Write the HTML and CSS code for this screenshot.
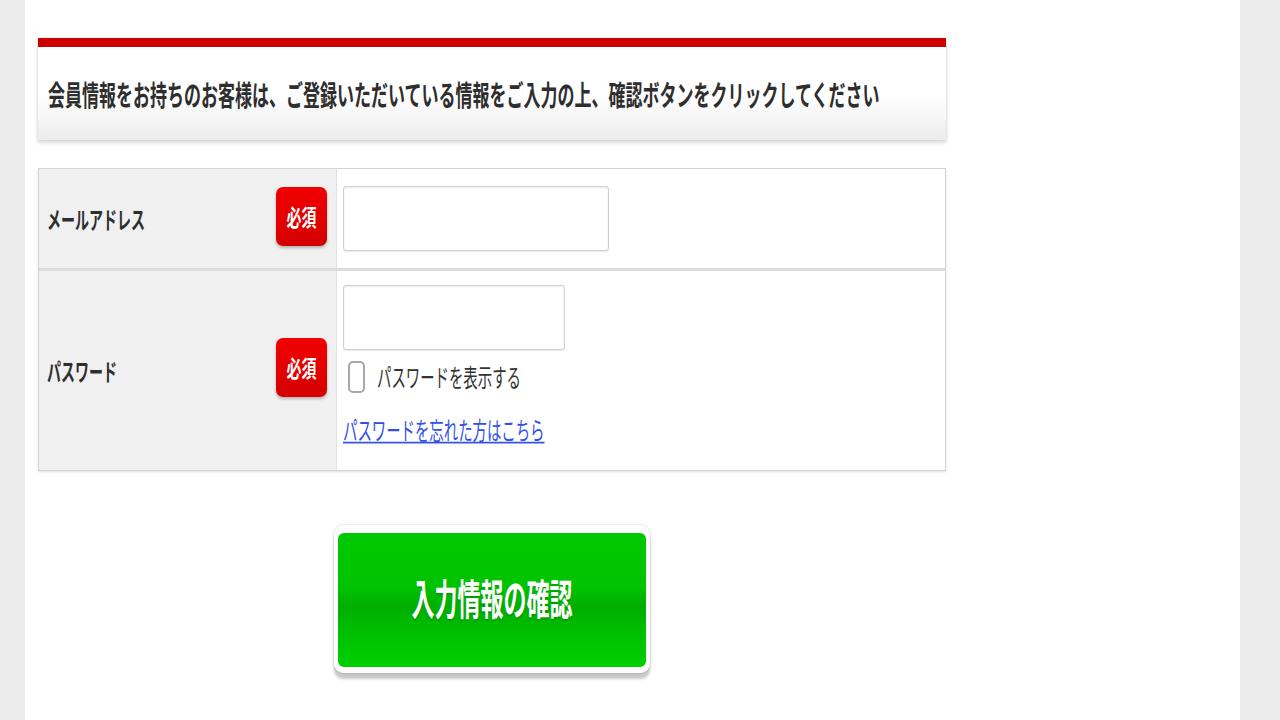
FILE: index.html
```html
<!DOCTYPE html>
<html lang="ja">
<head>
<meta charset="utf-8">
<title>ログイン</title>
<link rel="stylesheet" href="styles.css">
</head>
<body>
<div class="page">
  <div class="content">
    <div class="notice">
      <p class="notice-text"><span class="tall">会員情報をお持ちのお客様は、ご登録いただいている情報をご入力の上、確認ボタンをクリックしてください</span></p>
    </div>

    <div class="form-table">
      <div class="row row-email">
        <div class="label-cell">
          <span class="label"><span class="tall">メールアドレス</span></span>
          <span class="badge"><span class="tall-s">必須</span></span>
        </div>
        <div class="field-cell">
          <input class="text-input email" type="text" aria-label="メールアドレス">
        </div>
      </div>
      <div class="row row-pass">
        <div class="label-cell">
          <span class="label"><span class="tall">パスワード</span></span>
          <span class="badge"><span class="tall-s">必須</span></span>
        </div>
        <div class="field-cell">
          <input class="text-input pass" type="password" aria-label="パスワード">
          <label class="show-pass"><input type="checkbox" class="check"><span class="tall">パスワードを表示する</span></label>
          <a href="#" class="forgot"><span class="tall">パスワードを忘れた方はこちら</span></a>
        </div>
      </div>
    </div>

    <div class="actions">
      <div class="confirm-frame">
        <button class="confirm" type="button"><span class="tall-b">入力情報の確認</span></button>
      </div>
    </div>
  </div>
</div>
</body>
</html>
```

FILE: styles.css
```css
html, body {
  margin: 0;
  padding: 0;
}
body {
  background: #ececec;
  font-family: "Noto Sans CJK JP", "Noto Sans", sans-serif;
  color: #333;
}
.page {
  width: 1215px;
  min-height: 720px;
  margin-left: 25px;
  background: #fff;
  padding: 38px 0 0 13px;
  box-sizing: border-box;
}
.content {
  width: 908px;
}
.tall {
  display: inline-block;
  transform: scaleY(1.7);
}
.tall-s {
  display: inline-block;
  transform: scaleY(1.5);
}
.tall-b {
  display: inline-block;
  transform: scaleY(1.85);
}

/* notice */
.notice {
  border-top: 9px solid #cc0000;
  height: 102px;
  box-sizing: border-box;
  background: linear-gradient(#ffffff 0%, #ffffff 50%, #ececec 100%);
  box-shadow: 0 3px 4px rgba(0, 0, 0, 0.15), 1px 0 2px rgba(0, 0, 0, 0.05), -1px 0 2px rgba(0, 0, 0, 0.05);
  display: flex;
  align-items: center;
  padding-left: 10px;
}
.notice-text {
  margin: 0;
  font-size: 17px;
  font-weight: bold;
  line-height: 1;
  color: #2e2e2e;
  white-space: nowrap;
}

/* form table */
.form-table {
  margin-top: 28px;
  border: 1px solid #d4d4d4;
  box-shadow: 0 1px 2px rgba(0, 0, 0, 0.12);
}
.row {
  display: grid;
  grid-template-columns: 298px 1fr;
}
.row + .row {
  border-top: 3px solid #dcdcdc;
}
.row-email {
  height: 99px;
}
.row-pass {
  height: 199px;
}
.label-cell {
  background: #f0f0f0;
  display: flex;
  align-items: center;
  justify-content: space-between;
  padding: 0 9px 0 8px;
  border-right: 1px solid #e2e2e2;
}
.label {
  font-size: 14px;
  font-weight: bold;
  color: #2e2e2e;
  line-height: 1;
}
.badge {
  width: 51px;
  height: 59px;
  border-radius: 7px;
  background: linear-gradient(#f20000, #d40000);
  box-shadow: 0 2px 3px rgba(0, 0, 0, 0.25);
  color: #fff;
  font-size: 15px;
  font-weight: bold;
  display: flex;
  align-items: center;
  justify-content: center;
}
.row-email .badge {
  margin-top: -5px;
}
.row-pass .badge {
  margin-top: -6px;
}
.field-cell {
  background: #fff;
  padding-left: 6px;
}
.row-email .field-cell {
  display: flex;
  align-items: center;
}
.row-pass .field-cell {
  padding-top: 14px;
}
.text-input {
  display: block;
  height: 65px;
  box-sizing: border-box;
  border: 1px solid #cfcfcf;
  border-radius: 3px;
  box-shadow: inset 0 1px 2px rgba(0, 0, 0, 0.08), 0 1px 1px rgba(0, 0, 0, 0.08);
  background: #fff;
  margin: 0;
}
.text-input.email {
  width: 266px;
}
.text-input.pass {
  width: 222px;
}
.show-pass {
  display: flex;
  align-items: center;
  gap: 12px;
  margin-top: 11px;
  padding-left: 5px;
  font-size: 14.4px;
  color: #333;
  line-height: 1;
}
.check {
  appearance: none;
  -webkit-appearance: none;
  width: 17px;
  height: 32px;
  margin: 0;
  border: 2px solid #a8a8a8;
  border-radius: 5px;
  background: #fff;
  box-sizing: border-box;
}
.forgot {
  display: block;
  margin-top: 30px;
  font-size: 14.4px;
  line-height: 1;
  color: #3050e8;
  width: max-content;
}
.forgot .tall {
  text-decoration: underline;
  text-decoration-thickness: 1px;
  text-underline-offset: 1px;
}

/* action */
.actions {
  display: flex;
  justify-content: center;
  margin-top: 54px;
}
.confirm-frame {
  padding: 8px 4px 6px;
  background: #fff;
  border-radius: 9px;
  box-shadow: 0 0 2px rgba(0, 0, 0, 0.25), 0 6px 3px rgba(0, 0, 0, 0.22);
}
.confirm {
  display: flex;
  align-items: center;
  justify-content: center;
  width: 308px;
  height: 134px;
  border: none;
  border-radius: 6px;
  background: linear-gradient(#00c800 0%, #00c400 40%, #00ad00 55%, #00c000 75%, #00d000 100%);
  color: #fff;
  font-family: "Noto Sans CJK JP", sans-serif;
  font-size: 23px;
  font-weight: bold;
  padding: 0 0 6px;
  margin: 0;
  text-shadow: 0 1px 1px rgba(0, 0, 0, 0.15);
}
```
